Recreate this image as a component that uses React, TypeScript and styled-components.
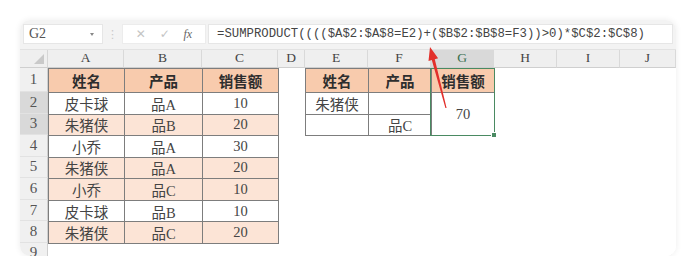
import React from 'react';
import styled, { createGlobalStyle } from 'styled-components';

const GlobalStyle = createGlobalStyle`
  html, body {
    margin: 0;
    padding: 0;
    background: #ffffff;
  }
  body {
    font-family: "Liberation Serif", "Noto Sans CJK SC", serif;
  }
`;

const COLS = ['', 'A', 'B', 'C', 'D', 'E', 'F', 'G', 'H', 'I', 'J'];
const ORANGE = '#f8cbad';
const PEACH = '#fce4d6';

type CellData = { text?: string; bg?: string; bold?: boolean; border?: boolean; span?: number };

const left: [string, string, string][] = [
  ['皮卡球', '品A', '10'],
  ['朱猪侠', '品B', '20'],
  ['小乔', '品A', '30'],
  ['朱猪侠', '品A', '20'],
  ['小乔', '品C', '10'],
  ['皮卡球', '品B', '10'],
  ['朱猪侠', '品C', '20']
];
const leftBg = ['#ffffff', PEACH, '#ffffff', PEACH, PEACH, '#ffffff', PEACH];

function buildRow(r: number): (CellData | null)[] {
  // index 1..10 for columns A..J
  const row: (CellData | null)[] = Array(11).fill({});
  if (r === 1) {
    ['姓名', '产品', '销售额'].forEach((t, i) => {
      row[1 + i] = { text: t, bg: ORANGE, bold: true, border: true };
      row[5 + i] = { text: t, bg: ORANGE, bold: true, border: true };
    });
  } else if (r >= 2 && r <= 8) {
    left[r - 2].forEach((t, i) => {
      row[1 + i] = { text: t, bg: leftBg[r - 2], border: true };
    });
    if (r === 2) {
      row[5] = { text: '朱猪侠', border: true };
      row[6] = { border: true };
      row[7] = { text: '70', border: true, span: 2 };
    }
    if (r === 3) {
      row[5] = { border: true };
      row[6] = { text: '品C', border: true };
      row[7] = null;
    }
  }
  return row;
}

export default function App() {
  const rows = [1, 2, 3, 4, 5, 6, 7, 8, 9];
  return (
    <>
      <GlobalStyle />
      <Frame>
        <Toolbar>
          <NameBox>
            <span>G2</span>
            <DropArrow />
          </NameBox>
          <Grip>⋮</Grip>
          <FuncButtons>
            <FuncIcon>✕</FuncIcon>
            <FuncIcon>✓</FuncIcon>
            <FxIcon>fx</FxIcon>
          </FuncButtons>
          <FormulaBox>=SUMPRODUCT(((($A$2:$A$8=E2)+($B$2:$B$8=F3))&gt;0)*$C$2:$C$8)</FormulaBox>
        </Toolbar>
        <Sheet>
          <Corner>
            <CornerMark />
          </Corner>
          {COLS.slice(1).map((c, i) => (
            <ColHead key={c} $col={i + 2} $active={c === 'G'}>
              {c}
            </ColHead>
          ))}
          {rows.map(r => {
            const cells = buildRow(r);
            return (
              <React.Fragment key={r}>
                <RowHead $row={r + 1} $active={r === 2 || r === 3}>
                  {r}
                </RowHead>
                {cells.slice(1).map((cell, i) =>
                  cell === null ? null : (
                    <Cell
                      key={i}
                      $col={i + 2}
                      $row={r + 1}
                      $span={cell.span || 1}
                      $bg={cell.bg}
                      $bold={cell.bold}
                      $border={cell.border}
                    >
                      {cell.text}
                    </Cell>
                  )
                )}
              </React.Fragment>
            );
          })}
          <Selection />
        </Sheet>
        <Arrow viewBox="0 0 656 236" width="656" height="236">
          <polygon
            points="410,27 418.1,38.3 414.8,39.2 426.6,87.9 425.4,88.1 411.8,40 408.5,40.9"
            fill="#e2302b"
          />
        </Arrow>
      </Frame>
    </>
  );
}

const Frame = styled.div`
  position: relative;
  margin: 20px 0 0 20px;
  width: 656px;
  height: 236px;
  border-radius: 10px;
  overflow: hidden;
  background: #ffffff;
  box-shadow: 0 0 6px rgba(0, 0, 0, 0.08);
`;

const Toolbar = styled.div`
  height: 30px;
  box-sizing: border-box;
  padding: 4px 3px 5px 3px;
  display: flex;
  align-items: stretch;
  background: #f3f3f3;
  border-bottom: 1px solid #e2e2e2;
`;

const NameBox = styled.div`
  width: 80px;
  box-sizing: border-box;
  background: #ffffff;
  border: 1px solid #e6e6e6;
  display: flex;
  align-items: center;
  justify-content: space-between;
  padding: 0 8px 0 5px;
  font-size: 14px;
  color: #555;
`;

const DropArrow = styled.span`
  width: 0;
  height: 0;
  border-left: 2.5px solid transparent;
  border-right: 2.5px solid transparent;
  border-top: 3px solid #888;
`;

const Grip = styled.div`
  width: 19px;
  display: flex;
  align-items: center;
  justify-content: center;
  color: #c8c8c8;
  font-size: 11px;
  font-family: "DejaVu Sans", sans-serif;
`;

const FuncButtons = styled.div`
  width: 84px;
  box-sizing: border-box;
  background: #ffffff;
  border: 1px solid #ececec;
  display: flex;
  align-items: center;
  justify-content: space-around;
  padding: 0 6px;
`;

const FuncIcon = styled.span`
  color: #c4c4c4;
  font-size: 12px;
  font-family: "DejaVu Sans", sans-serif;
`;

const FxIcon = styled.span`
  color: #666;
  font-size: 12px;
  font-style: italic;
  font-family: "Liberation Serif", serif;
`;

const FormulaBox = styled.div`
  flex: 1;
  margin-left: 2px;
  background: #ffffff;
  border: 1px solid #e6e6e6;
  display: flex;
  align-items: center;
  padding-left: 8px;
  font-family: "Liberation Mono", monospace;
  font-size: 12.3px;
  color: #444;
  white-space: nowrap;
  overflow: hidden;
`;

const Sheet = styled.div`
  display: grid;
  grid-template-columns: 28px 76px 78px 76px 27px 63px 63px 63px 63px 63px 56px;
  grid-template-rows: 18px 24px repeat(7, 21.57px) 20px;
`;

const Corner = styled.div`
  grid-column: 1;
  grid-row: 1;
  background: #efefef;
  border-right: 1px solid #d6d6d6;
  border-bottom: 1px solid #cfcfcf;
  position: relative;
`;

const CornerMark = styled.div`
  position: absolute;
  right: 3px;
  bottom: 3px;
  width: 0;
  height: 0;
  border-left: 10px solid transparent;
  border-bottom: 10px solid #c9c9c9;
`;

const ColHead = styled.div<{ $col: number; $active?: boolean }>`
  grid-column: ${p => p.$col};
  grid-row: 1;
  background: ${p => (p.$active ? '#d9d9d9' : '#efefef')};
  border-right: 1px solid #d9d9d9;
  border-bottom: 1px solid #cfcfcf;
  display: flex;
  align-items: flex-end;
  justify-content: center;
  padding-bottom: 1px;
  font-size: 13.5px;
  color: ${p => (p.$active ? '#3a6f50' : '#444')};
`;

const RowHead = styled.div<{ $row: number; $active?: boolean }>`
  grid-column: 1;
  grid-row: ${p => p.$row};
  background: ${p => (p.$active ? '#d9d9d9' : '#f0f0f0')};
  border-right: 1px solid #cfcfcf;
  border-bottom: 1px solid #e2e2e2;
  display: flex;
  align-items: center;
  justify-content: center;
  font-size: 15px;
  color: #555;
`;

const Cell = styled.div<{
  $col: number;
  $row: number;
  $span: number;
  $bg?: string;
  $bold?: boolean;
  $border?: boolean;
}>`
  grid-column: ${p => p.$col};
  grid-row: ${p => p.$row} / span ${p => p.$span};
  background: ${p => p.$bg || '#ffffff'};
  display: flex;
  align-items: center;
  justify-content: center;
  font-size: 14.5px;
  font-weight: ${p => (p.$bold ? 700 : 400)};
  color: ${p => (p.$bold ? '#2e2e2e' : '#444')};
  border: ${p => (p.$border ? '1px solid #7d7d7d' : 'none')};
  margin: ${p => (p.$border ? '0 -1px -1px 0' : '0')};
  position: relative;
  z-index: ${p => (p.$border ? 1 : 0)};
`;

const Selection = styled.div`
  grid-column: 8;
  grid-row: 2 / 5;
  margin: 0 -1px -1px -1px;
  border: 1.5px solid #4a8a62;
  z-index: 2;
  pointer-events: none;
  position: relative;

  &::after {
    content: '';
    position: absolute;
    right: -3px;
    bottom: -3px;
    width: 4px;
    height: 4px;
    background: #4a8a62;
    border: 1px solid #ffffff;
  }
`;

const Arrow = styled.svg`
  position: absolute;
  left: 0;
  top: 0;
  pointer-events: none;
  z-index: 5;
`;
